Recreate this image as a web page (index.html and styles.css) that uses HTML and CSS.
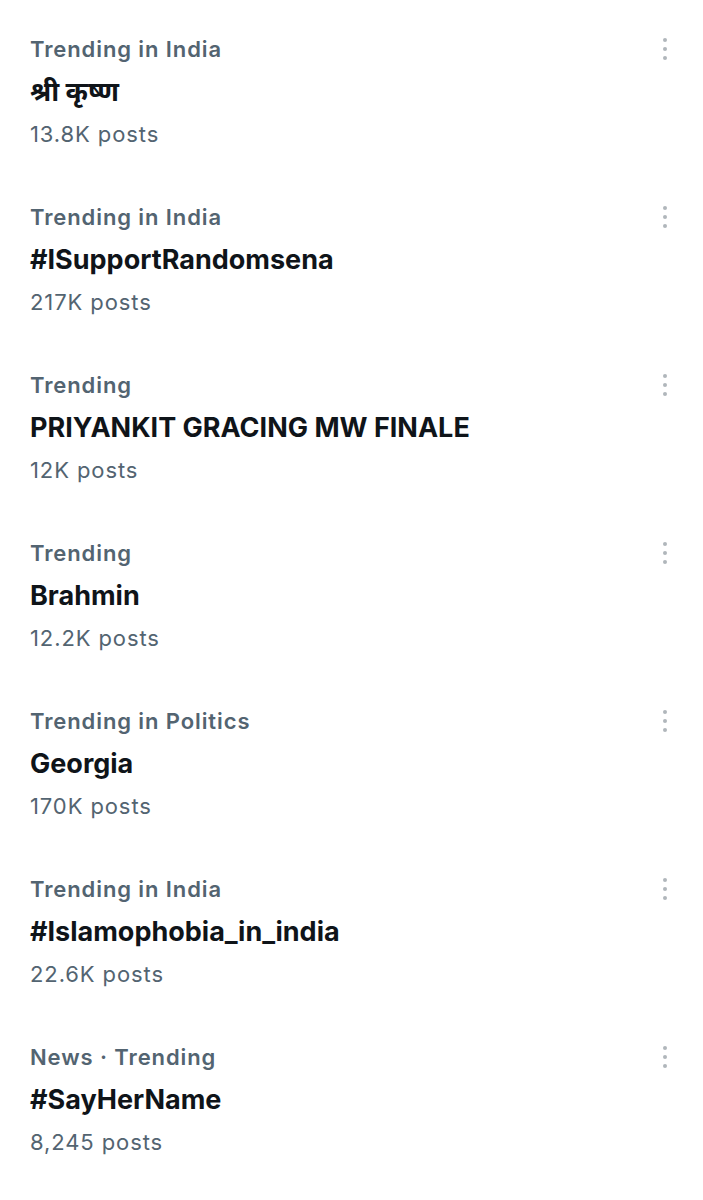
FILE: index.html
```html
<!DOCTYPE html>
<html lang="en">
<head>
    <meta charset="UTF-8">
    <meta name="viewport" content="width=device-width, initial-scale=1.0">
    <title>Trends</title>
    <link rel="stylesheet" href="styles.css">
</head>
<body>

    <div class="trends">
        <div class="trend">
            <div class="trend-text">
                <div class="trend-label">Trending in India</div>
                <div class="trend-title">श्री कृष्ण</div>
                <div class="trend-count">13.8K posts</div>
            </div>
            <div class="more"><span></span><span></span><span></span></div>
        </div>

        <div class="trend">
            <div class="trend-text">
                <div class="trend-label">Trending in India</div>
                <div class="trend-title">#ISupportRandomsena</div>
                <div class="trend-count">217K posts</div>
            </div>
            <div class="more"><span></span><span></span><span></span></div>
        </div>

        <div class="trend">
            <div class="trend-text">
                <div class="trend-label">Trending</div>
                <div class="trend-title">PRIYANKIT GRACING MW FINALE</div>
                <div class="trend-count">12K posts</div>
            </div>
            <div class="more"><span></span><span></span><span></span></div>
        </div>

        <div class="trend">
            <div class="trend-text">
                <div class="trend-label">Trending</div>
                <div class="trend-title">Brahmin</div>
                <div class="trend-count">12.2K posts</div>
            </div>
            <div class="more"><span></span><span></span><span></span></div>
        </div>

        <div class="trend">
            <div class="trend-text">
                <div class="trend-label">Trending in Politics</div>
                <div class="trend-title">Georgia</div>
                <div class="trend-count">170K posts</div>
            </div>
            <div class="more"><span></span><span></span><span></span></div>
        </div>

        <div class="trend">
            <div class="trend-text">
                <div class="trend-label">Trending in India</div>
                <div class="trend-title">#Islamophobia_in_india</div>
                <div class="trend-count">22.6K posts</div>
            </div>
            <div class="more"><span></span><span></span><span></span></div>
        </div>

        <div class="trend">
            <div class="trend-text">
                <div class="trend-label">News · Trending</div>
                <div class="trend-title">#SayHerName</div>
                <div class="trend-count">8,245 posts</div>
            </div>
            <div class="more"><span></span><span></span><span></span></div>
        </div>
    </div>

</body>
</html>
```

FILE: styles.css
```css
body {
    margin: 0;
    background: #ffffff;
    font-family: Inter, "Noto Sans", "Noto Sans Devanagari", sans-serif;
}
.trends {
    padding-top: 34px;
}
.trend {
    display: flex;
    justify-content: space-between;
    align-items: flex-start;
    height: 168px;
    padding: 0 36px 0 30px;
    box-sizing: border-box;
}
.trend-label {
    color: #536471;
    font-size: 22px;
    font-weight: 600;
    line-height: 30px;
    letter-spacing: 0.9px;
}
.trend-title {
    color: #0f1419;
    font-size: 27px;
    font-weight: 700;
    line-height: 34px;
    margin-top: 11px;
}
.trend-count {
    color: #536471;
    font-size: 22px;
    line-height: 30px;
    margin-top: 10px;
    letter-spacing: 0.9px;
}
.more {
    display: flex;
    flex-direction: column;
    gap: 5px;
    padding-top: 4px;
}
.more span {
    width: 4px;
    height: 4px;
    border-radius: 50%;
    background: #b0b6bb;
}
```
